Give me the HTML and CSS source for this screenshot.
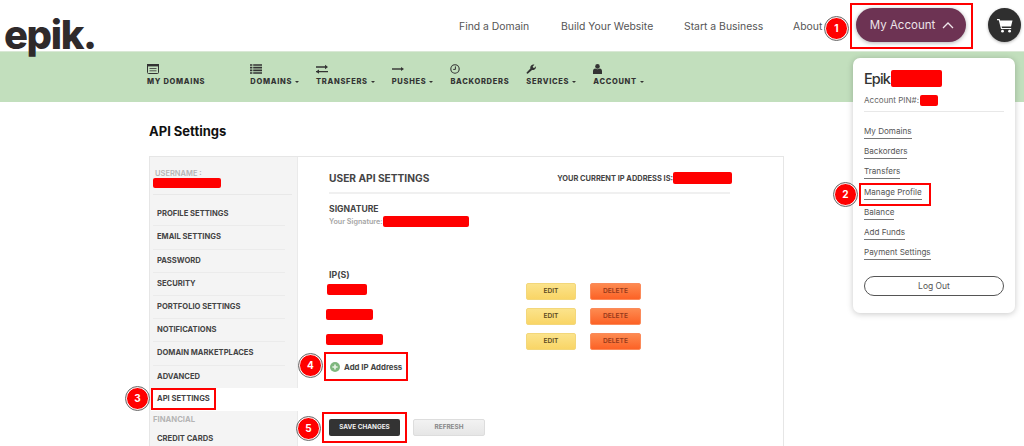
FILE: index.html
```html
<!DOCTYPE html>
<html lang="en">
<head>
<meta charset="utf-8">
<title>API Settings</title>
<link rel="stylesheet" href="styles.css">
</head>
<body>
<div class="page">
  <header class="top">
    <div class="logo">epik.</div>
    <nav class="topnav">
      <a class="n1">Find a Domain</a>
      <a class="n2">Build Your Website</a>
      <a class="n3">Start a Business</a>
      <a class="n4">About</a>
    </nav>
    <button class="account">My Account
      <svg width="12" height="7" viewBox="0 0 12 7"><path d="M1 6l5-5 5 5" fill="none" stroke="#efe6ea" stroke-width="1.3"/></svg>
    </button>
    <div class="cart">
      <svg width="16" height="15" viewBox="0 0 16 15"><path d="M0 1h2.6l.5 1.6H15.5l-1.5 6H4.6l.4 1.3h9.2v1.2H4L1.8 2.2H0z" fill="#fff"/><circle cx="5.5" cy="13.2" r="1.4" fill="#fff"/><circle cx="12.6" cy="13.2" r="1.4" fill="#fff"/></svg>
    </div>
  </header>

  <nav class="subnav">
    <a class="sub first">
      <svg class="ic" width="12" height="10" viewBox="0 0 12 10"><rect x=".5" y=".5" width="11" height="9" rx="1" fill="none" stroke="#333"/><rect x="0" y="0" width="12" height="2.4" fill="#333"/><path d="M2.5 4.5h7M2.5 6.8h7" stroke="#333" stroke-width=".8"/></svg>
      <span>MY DOMAINS</span>
    </a>
    <a class="sub">
      <svg class="ic" width="12" height="10" viewBox="0 0 12 10"><path d="M0 1h2.4M3.2 1H12M0 3.7h2.4M3.2 3.7H12M0 6.4h2.4M3.2 6.4H12M0 9h2.4M3.2 9H12" stroke="#333" stroke-width="1.7"/></svg>
      <span>DOMAINS<i class="caret"></i></span>
    </a>
    <a class="sub">
      <svg class="ic" width="12" height="10" viewBox="0 0 12 10"><path d="M0 3h9.5M0 7.6h12" stroke="#333" stroke-width="1.4"/><path d="M9 .8L12 3 9 5.2zM3 5.4L0 7.6 3 9.8z" fill="#333"/></svg>
      <span>TRANSFERS<i class="caret"></i></span>
    </a>
    <a class="sub">
      <svg class="ic" width="12" height="10" viewBox="0 0 12 10"><path d="M0 5h9.5" stroke="#333" stroke-width="1.4"/><path d="M9 3l3 2-3 2z" fill="#333"/></svg>
      <span>PUSHES<i class="caret"></i></span>
    </a>
    <a class="sub">
      <svg class="ic" width="10" height="10" viewBox="0 0 10 10"><circle cx="5" cy="5" r="4.2" fill="none" stroke="#333" stroke-width="1.1"/><path d="M5.4 2.4v3H3.2" fill="none" stroke="#333" stroke-width="1"/></svg>
      <span>BACKORDERS</span>
    </a>
    <a class="sub">
      <svg class="ic" width="10" height="10" viewBox="0 0 10 10"><path d="M.6 8.4L4.4 4.6C4 3 4.6 1.2 6.4.7 7.2.4 8 .5 8.4.7L6.7 2.4 7 3.6l1.2.4L9.8 2.2c.3 1.6-.3 3-1.6 3.6-.8.3-1.4.3-2.2.1L2 9.6c-.6.4-1.8-.5-1.4-1.2z" fill="#333"/></svg>
      <span>SERVICES<i class="caret"></i></span>
    </a>
    <a class="sub">
      <svg class="ic" width="9" height="10" viewBox="0 0 9 10"><circle cx="4.5" cy="2.4" r="2.3" fill="#333"/><path d="M0 10V7.2C0 5.6 1 4.8 2.2 4.6c1.4.9 3.2.9 4.6 0C8 4.8 9 5.6 9 7.2V10z" fill="#333"/></svg>
      <span>ACCOUNT<i class="caret"></i></span>
    </a>
  </nav>

  <main class="main">
    <h1 class="title">API Settings</h1>
    <section class="panel">
      <aside class="side">
        <div class="user">
          <div class="user-label">USERNAME :</div>
          <span class="red r-user"></span>
        </div>
        <ul class="menu">
          <li>PROFILE SETTINGS</li>
          <li>EMAIL SETTINGS</li>
          <li>PASSWORD</li>
          <li>SECURITY</li>
          <li>PORTFOLIO SETTINGS</li>
          <li>NOTIFICATIONS</li>
          <li>DOMAIN MARKETPLACES</li>
          <li>ADVANCED</li>
          <li class="active">API SETTINGS</li>
        </ul>
        <div class="group">FINANCIAL</div>
        <div class="menu-last">CREDIT CARDS</div>
      </aside>
      <div class="content">
        <div class="head">
          <h2>USER API SETTINGS</h2>
          <div class="cur-ip">YOUR CURRENT IP ADDRESS IS:<span class="red r-ip"></span></div>
        </div>
        <h3 class="sig">SIGNATURE</h3>
        <div class="sig-line">Your Signature:<span class="red r-sig"></span></div>
        <h3 class="ips">IP(S)</h3>
        <div class="ip-row">
          <div class="ip-cell"><span class="red r-a"></span></div>
          <a class="btn edit">EDIT</a><a class="btn del">DELETE</a>
        </div>
        <div class="ip-row">
          <div class="ip-cell"><span class="red r-b"></span></div>
          <a class="btn edit">EDIT</a><a class="btn del">DELETE</a>
        </div>
        <div class="ip-row">
          <div class="ip-cell"><span class="red r-c"></span></div>
          <a class="btn edit">EDIT</a><a class="btn del">DELETE</a>
        </div>
        <div class="add">
          <svg width="10" height="10" viewBox="0 0 10 10"><circle cx="5" cy="5" r="5" fill="#7fb77e"/><path d="M5 2.4v5.2M2.4 5h5.2" stroke="#e9f4e6" stroke-width="1.6"/></svg>
          <span>Add IP Address</span>
        </div>
        <div class="actions">
          <a class="save">SAVE CHANGES</a>
          <a class="refresh">REFRESH</a>
        </div>
      </div>
    </section>
  </main>

  <div class="drop">
    <div class="drop-name">Epik<span class="red r-name"></span></div>
    <div class="drop-pin">Account PIN#:<span class="red r-pin"></span></div>
    <ul class="drop-links">
      <li><a>My Domains</a></li>
      <li><a>Backorders</a></li>
      <li><a>Transfers</a></li>
      <li><a>Manage Profile</a></li>
      <li><a>Balance</a></li>
      <li><a>Add Funds</a></li>
      <li><a>Payment Settings</a></li>
    </ul>
    <a class="logout">Log Out</a>
  </div>

  <div class="mark m1"></div>
  <div class="mark m2"></div>
  <div class="mark m3"></div>
  <div class="mark m4"></div>
  <div class="mark m5"></div>
  <div class="badge b1">1</div>
  <div class="badge b2">2</div>
  <div class="badge b3">3</div>
  <div class="badge b4">4</div>
  <div class="badge b5">5</div>
</div>
</body>
</html>
```
FILE: styles.css
```css
* { box-sizing: border-box; }
html, body { margin: 0; padding: 0; background: #fff; }
body { font-family: "Inter", "Liberation Sans", sans-serif; color: #333; }
ul { list-style: none; margin: 0; padding: 0; }
h1, h2, h3 { margin: 0; }
.page { position: relative; width: 1024px; height: 446px; overflow: hidden; }

.top { display: flex; align-items: flex-start; height: 51px; }
.logo { font-family: "Inter", sans-serif; font-weight: 800; font-size: 40px; line-height: 50px; color: #2f2a2b; margin: 10px 0 0 4px; letter-spacing: -1.4px; width: 455px; height: 41px; position: relative; z-index: 2; }
.topnav { display: flex; font-size: 10.4px; color: #555; padding-top: 20px; line-height: 14px; }
.topnav a { white-space: nowrap; }
.n1 { width: 102px; }
.n2 { width: 123px; }
.n3 { width: 109px; }
.n4 { width: 63px; }
.account { display: flex; align-items: center; justify-content: center; gap: 7px; width: 110px; height: 34px; margin-top: 8px; padding: 0 0 0 2px; border: 0; border-radius: 17px; background: #6d3353; color: #ece3e8; font: 11.5px "Inter", sans-serif; box-shadow: 0 1px 4px rgba(0,0,0,.3); }
.cart { display: flex; align-items: center; justify-content: center; width: 33px; height: 34px; margin: 8px 0 0 22px; border-radius: 50%; background: #2f2f2f; box-shadow: 0 1px 3px rgba(0,0,0,.3); }

.subnav { display: flex; gap: 17px; height: 51px; padding: 12px 0 0 147px; background: #c2dfbd; border-top: 1px solid #d9e8d5; }
.sub { display: flex; flex-direction: column; gap: 3px; font-size: 7.5px; font-weight: 800; letter-spacing: .7px; color: #333; line-height: 10px; white-space: nowrap; }
.sub.first { margin-right: 28px; }
.ic { display: block; }
.caret { display: inline-block; margin-left: 3px; vertical-align: 1px; border: 2px solid transparent; border-top-color: #333; border-bottom: 0; width: 0; height: 0; border-left-width: 2.5px; border-right-width: 2.5px; }

.main { padding: 21px 0 0 149px; }
.title { font-size: 13px; font-weight: 700; line-height: 16px; color: #111; height: 33px; }
.panel { display: flex; width: 635px; height: 300px; border: 1px solid #e6e6e6; border-bottom: 0; }
.side { width: 148px; background: #f4f4f4; border-right: 1px solid #eaeaea; flex: none; }
.user { margin: 0 5px 0 3px; padding: 12px 0 0 2px; height: 38px; border-bottom: 1px solid #e8e8e8; }
.user-label { font-size: 7.5px; font-weight: 600; color: #b5b5b5; line-height: 9px; height: 9px; }
.red { display: inline-block; background: #f00; border-radius: 2px; vertical-align: top; }
.r-user { width: 68px; height: 10px; margin-left: -2px; display: block; }
.menu { padding: 8.2px 0 0; }
.menu li { height: 23.2px; margin: 0 12px 0 3px; padding-left: 4px; font-size: 7.6px; font-weight: 700; line-height: 22px; color: #444; border-bottom: 1px solid #ebebeb; white-space: nowrap; }
.menu li.active { background: #fff; margin: -1px -1px 0 1px; padding-left: 6px; border: 0; height: 23px; position: relative; }
.group { font-size: 7.7px; font-weight: 700; color: #b5b5b5; margin: 3px 0 0 3px; line-height: 12px; }
.menu-last { font-size: 7.6px; font-weight: 700; color: #444; margin: 8.4px 0 0 7px; line-height: 10px; }

.content { flex: 1; padding: 0 0 0 31px; min-width: 0; }
.head { display: flex; justify-content: space-between; align-items: center; width: 401px; height: 37px; margin-top: 0; padding-top: 7px; border-bottom: 2px solid #f0f0f0; }
.head h2 { font-size: 10.2px; font-weight: 700; color: #444; line-height: 14px; }
.cur-ip { display: flex; align-items: center; font-size: 7.45px; font-weight: 700; color: #444; margin-right: -2px; }
.r-ip { width: 59px; height: 12px; }
.sig { font-size: 8.6px; font-weight: 700; color: #444; line-height: 11px; margin-top: 10px; }
.sig-line { display: flex; align-items: center; font-size: 7.2px; font-weight: 600; color: #a5a5a5; height: 11px; margin-top: 1px; }
.r-sig { width: 86px; height: 11px; }
.ips { font-size: 8.8px; font-weight: 700; color: #444; line-height: 12px; margin-top: 42px; height: 14px; }
.ip-row { display: flex; align-items: flex-start; height: 25px; }
.ip-cell { width: 197px; padding-top: 1px; margin-left: -2px; margin-right: 2px; }
.r-a { width: 40px; height: 11px; display: block; margin-left: 0; }
.r-b { width: 47px; height: 11px; display: block; margin-left: -1px; }
.r-c { width: 57px; height: 11px; display: block; margin-left: -1px; }
.btn { display: block; height: 17px; font-size: 6.6px; font-weight: 600; line-height: 17px; text-align: center; border-radius: 2px; }
.edit { width: 50px; margin-right: 14px; background: linear-gradient(#fbe38b, #f9d566); color: #5b4a1e; border: 1px solid #f3d77a; line-height: 15px; }
.del { width: 51px; background: linear-gradient(#fd8a50, #fc6226); color: #94391b; border: 1px solid #fb8a5a; line-height: 15px; }
.add { display: flex; align-items: center; gap: 4px; margin: 2px 0 0 1px; height: 14px; font-size: 7.8px; font-weight: 700; color: #444; }
.actions { display: flex; gap: 13px; margin-top: 45px; }
.save { display: block; width: 71px; height: 17px; background: #333; color: #f0f0f0; border-radius: 2px; font-size: 6.4px; font-weight: 700; line-height: 17px; text-align: center; }
.refresh { display: block; width: 72px; height: 17px; background: linear-gradient(#f2f2f2, #e6e6e6); border: 1px solid #ddd; color: #888; border-radius: 2px; font-size: 6.4px; font-weight: 700; line-height: 15px; text-align: center; }

.drop { position: absolute; left: 853px; top: 58px; width: 162px; height: 255px; padding: 11px 11px 0; background: #fff; border-radius: 7px; box-shadow: 0 1px 6px rgba(0,0,0,.22); }
.drop-name { display: flex; font-size: 14.5px; font-weight: 500; letter-spacing: -.9px; line-height: 17px; color: #333; height: 17px; margin-top: 1px; }
.r-name { width: 51px; height: 17px; margin-left: 1px; }
.drop-pin { display: flex; font-size: 8.1px; color: #666; height: 11px; line-height: 11px; margin-top: 8px; }
.r-pin { width: 18px; height: 11px; margin-left: 1px; }
.drop-links { margin-top: 5px; padding-top: 14px; border-top: 1px solid #e8e8e8; }
.drop-links li { height: 20.2px; font-size: 8.1px; line-height: 11px; color: #555; }
.drop-links a { display: inline-block; border-bottom: 1px solid #777; padding-bottom: 1px; white-space: nowrap; }
.logout { display: block; margin-top: 9px; height: 20px; border: 1px solid #555; border-radius: 10px; text-align: center; font-size: 8.5px; line-height: 18px; color: #555; }

.mark { position: absolute; border: 2px solid #f00; }
.m1 { left: 850px; top: 3px; width: 123px; height: 46px; }
.m2 { left: 859px; top: 183px; width: 72px; height: 23px; }
.m3 { left: 151px; top: 388px; width: 65px; height: 22px; }
.m4 { left: 324px; top: 352px; width: 84px; height: 29px; }
.m5 { left: 322px; top: 412px; width: 85px; height: 31px; }
.badge { position: absolute; width: 23px; height: 23px; border-radius: 50%; background: #f00; border: 1px solid #fff; outline: 1px solid #666; color: #fff; font-size: 10px; font-weight: 700; line-height: 21px; text-align: center; }
.b1 { left: 825px; top: 17px; }
.b2 { left: 834px; top: 183px; }
.b3 { left: 126px; top: 387px; }
.b4 { left: 299px; top: 354px; }
.b5 { left: 297px; top: 417px; }
```
